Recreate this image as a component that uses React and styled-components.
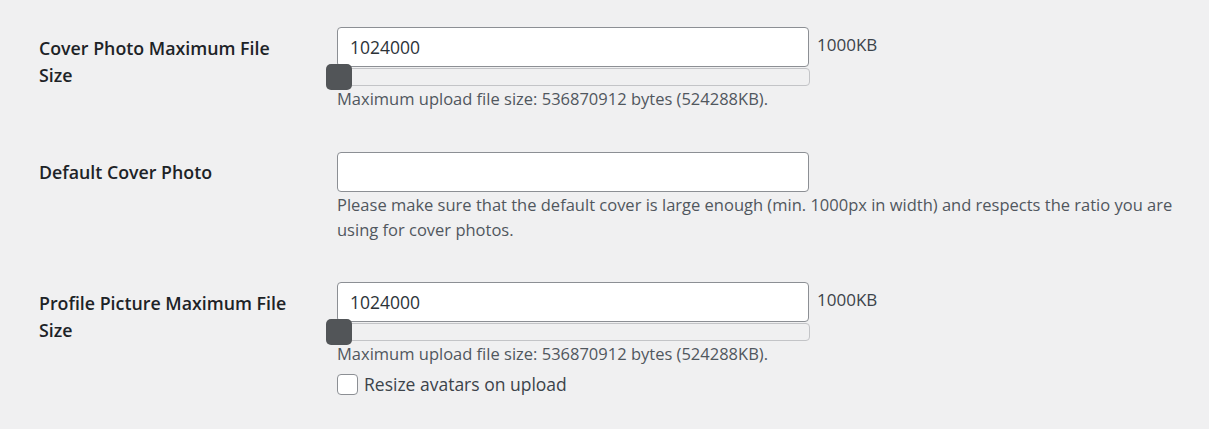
import React from 'react';
import styled, {createGlobalStyle} from 'styled-components';

const GlobalStyle = createGlobalStyle`
  html, body {
    margin: 0;
    padding: 0;
    background: #f0f0f1;
  }
  body {
    font-family: "Open Sans", "Noto Sans", "Liberation Sans", sans-serif;
    color: #1d2327;
  }
`;

const fields = [
    {
        label: 'Cover Photo Maximum File Size',
        value: '1024000',
        unit: '1000KB',
        slider: true,
        help: ['Maximum upload file size: 536870912 bytes (524288KB).']
    },
    {
        label: 'Default Cover Photo',
        value: '',
        help: [
            'Please make sure that the default cover is large enough (min. 1000px in width) and respects the ratio you are',
            'using for cover photos.'
        ]
    },
    {
        label: 'Profile Picture Maximum File Size',
        value: '1024000',
        unit: '1000KB',
        slider: true,
        help: ['Maximum upload file size: 536870912 bytes (524288KB).'],
        checkbox: 'Resize avatars on upload'
    }
];

export default function App() {
    return (
        <Page>
            <GlobalStyle/>
            {fields.map(field => (
                <Row key={field.label}>
                    <Label>{field.label}</Label>
                    <Field>
                        <InputLine>
                            <TextInput type="text" defaultValue={field.value}/>
                            {field.unit && <Unit>{field.unit}</Unit>}
                        </InputLine>
                        {field.slider && (
                            <Track>
                                <Thumb/>
                            </Track>
                        )}
                        <Help>
                            {field.help.map(line => <div key={line}>{line}</div>)}
                        </Help>
                        {field.checkbox && (
                            <CheckLabel>
                                <Box type="checkbox"/>
                                {field.checkbox}
                            </CheckLabel>
                        )}
                    </Field>
                </Row>
            ))}
        </Page>
    );
}

const Page = styled.div`
  padding: 7px 0 0 39px;
  width: 1209px;
  height: 429px;
  box-sizing: border-box;
  overflow: hidden;
`;

const Row = styled.div`
  display: grid;
  grid-template-columns: 298px 1fr;
  padding: 20px 0 20.5px;
`;

const Label = styled.div`
  width: 258px;
  padding-top: 7.5px;
  font-size: 17.8px;
  font-weight: 600;
  line-height: 27px;
  color: #1d2327;
`;

const Field = styled.div`
  display: flex;
  flex-direction: column;
`;

const InputLine = styled.div`
  display: flex;
  align-items: flex-start;
  gap: 8px;
`;

const TextInput = styled.input`
  width: 472px;
  height: 40px;
  box-sizing: border-box;
  margin: 0;
  padding: 0 12px;
  background: #fff;
  border: 1px solid #8c8f94;
  border-radius: 4px;
  font-family: inherit;
  font-size: 17.5px;
  color: #2c3338;
  outline: none;
`;

const Unit = styled.span`
  padding-top: 7px;
  font-size: 17px;
  line-height: 22px;
  color: #3c434a;
`;

const Track = styled.div`
  position: relative;
  width: 473px;
  height: 18px;
  margin-top: 1px;
  box-sizing: border-box;
  border: 1px solid #c3c4c7;
  border-radius: 4px;
  background: #f0f0f1;
`;

const Thumb = styled.span`
  position: absolute;
  left: -12px;
  top: -5px;
  width: 26px;
  height: 26px;
  border-radius: 5px;
  background: #525558;
`;

const Help = styled.div`
  font-size: 16.5px;
  line-height: 25px;
  color: #50575e;
`;

const CheckLabel = styled.label`
  display: flex;
  align-items: center;
  gap: 6px;
  margin-top: 6px;
  font-size: 17.5px;
  line-height: 25px;
  color: #3c434a;
`;

const Box = styled.input`
  appearance: none;
  width: 21px;
  height: 21px;
  margin: 0;
  box-sizing: border-box;
  border: 1px solid #8c8f94;
  border-radius: 4px;
  background: #fff;
`;
